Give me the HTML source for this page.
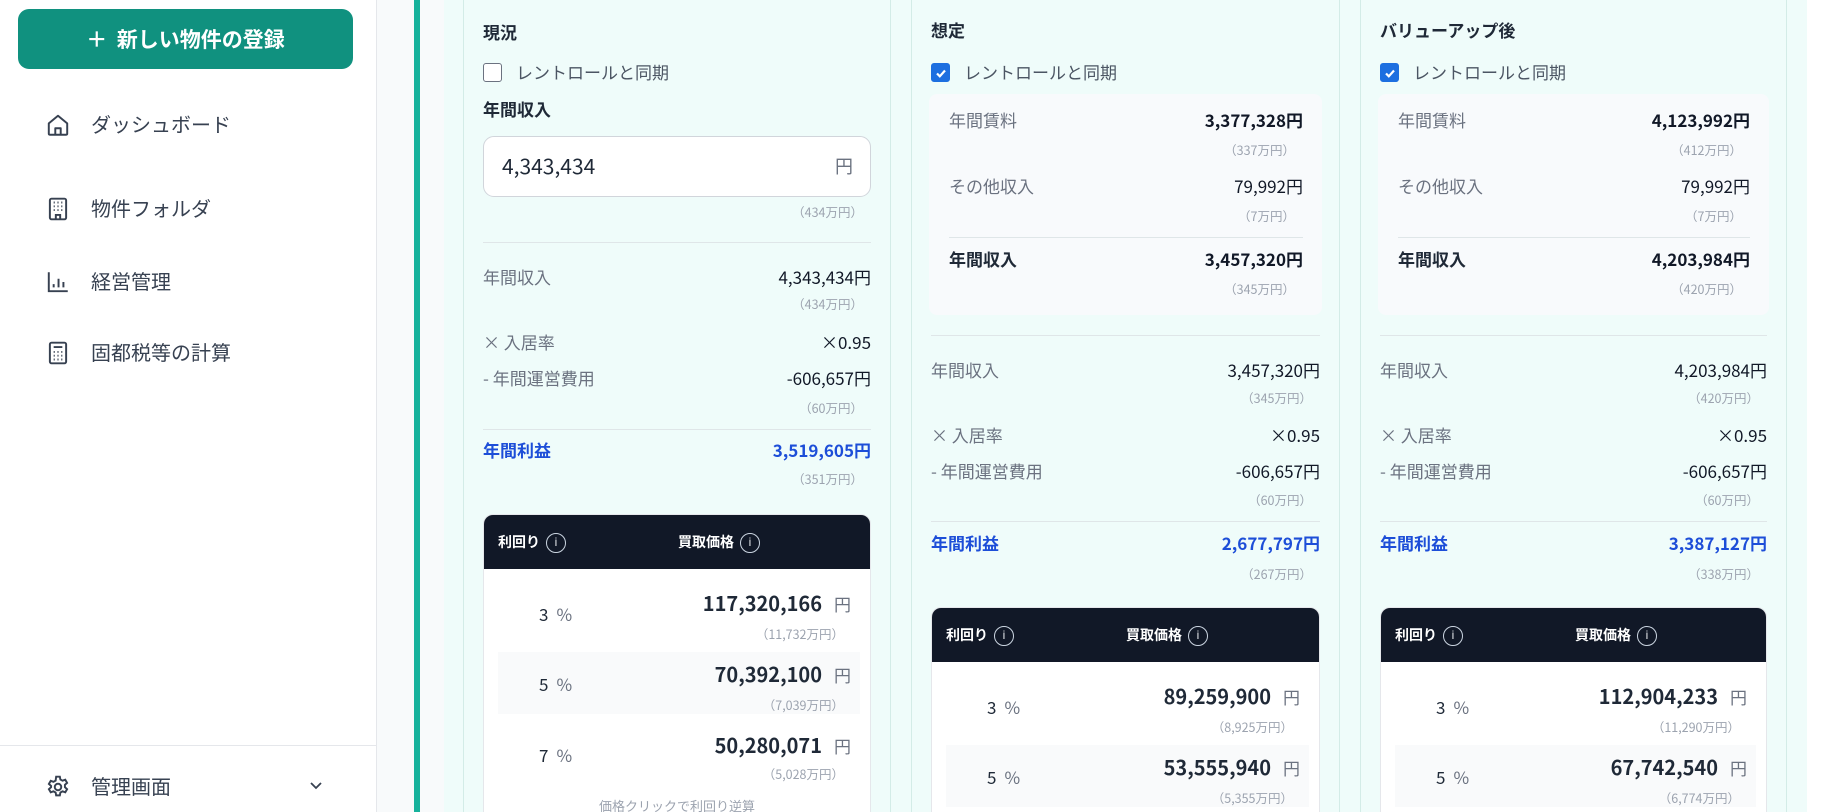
<!DOCTYPE html>
<html><head><meta charset="utf-8"><style>
*{box-sizing:border-box;margin:0;padding:0}
html,body{width:1825px;height:812px;overflow:hidden}
body{background:#fff;font-family:"Noto Sans CJK JP","Liberation Sans",sans-serif;position:relative}
#root{position:absolute;left:0;top:0;width:1825px;height:812px;overflow:hidden}
.a{position:absolute}
.side{left:0;top:0;width:377px;height:812px;background:#fff;border-right:1px solid #e5e7eb}
.btn{left:18px;top:9px;width:335px;height:60px;border-radius:11px;background:#10917f;color:#fff;font-size:21px;font-weight:bold;text-align:center;line-height:60px}
.nav{left:45px;font-size:20px;color:#374151;line-height:28px}
.nav svg{position:absolute;left:0;top:2px}
.nav span{position:absolute;left:46px;white-space:nowrap}
.card{top:-12px;height:824px;border:1px solid #d3ece7;border-bottom:none;border-radius:12px 12px 0 0;background:#effcfa;overflow:hidden}
.t{position:absolute;left:19px;font-size:17px;font-weight:bold;color:#1f2937;line-height:24px}
.cb{position:absolute;left:19px;font-size:17px;color:#4b5563;line-height:24px;white-space:nowrap}
.cb i{position:absolute;left:0;top:3px;width:19px;height:19px;border:1.5px solid #6b7280;border-radius:3px;background:#fff}
.cb i.on{background:#1d6fe0;border-color:#1d6fe0}
.cb span{position:absolute;left:33px}
.row{position:absolute;left:19px;right:19px;height:24px;line-height:24px;font-size:17px}
.row .l{float:left;color:#6b7280}.row .v{float:right;color:#111827}
.row.b .l{color:#1f2937;font-weight:bold}.row.b .v{font-weight:bold}
.row.p .l,.row.p .v{color:#1d4ed8;font-weight:bold}
.sub{position:absolute;right:27px;font-size:12.5px;color:#9ca3af;line-height:16px;white-space:nowrap}
.hr{position:absolute;left:19px;right:19px;height:1px;background:#dfe6e8}
.gbox{position:absolute;left:17px;right:17px;background:#f8fafc;border-radius:8px}
.tbl{position:absolute;left:19px;right:19px;background:#fff;border:1px solid #e5e7eb;border-bottom:none;border-radius:10px 10px 0 0;overflow:hidden}
.th{position:absolute;left:0;right:0;top:0;height:54px;background:#111827;color:#fff;font-size:14px;font-weight:bold;line-height:54px}
.th span{position:absolute;white-space:nowrap}
.ic{display:inline-block;width:20px;height:20px;border:1.5px solid #cbd5e1;border-radius:50%;font-size:12px;line-height:17px;text-align:center;vertical-align:middle;margin-left:6px;font-weight:normal;font-style:normal;color:#e5e7eb;font-family:"Liberation Sans",sans-serif}
.band{position:absolute;left:14px;right:10px;height:62px;background:#f9fafb}
.pc{position:absolute;left:55px;font-size:17px;color:#1f2937;line-height:24px}
.pc em{font-style:normal;color:#6b7280;margin-left:8px}
.pv{position:absolute;right:19px;font-size:20px;font-weight:bold;color:#1f2937;line-height:28px;white-space:nowrap}
.pv em{font-style:normal;font-weight:normal;color:#6b7280;font-size:17px;margin-left:12px}
.ps{position:absolute;right:26px;font-size:12.5px;color:#9ca3af;line-height:16px}
</style></head><body><div id="root">
<div class="a" style="left:377px;top:0;width:1448px;height:812px;background:#f8fafb"></div>
<div class="a" style="left:414px;top:0;width:6px;height:812px;background:#16b29c"></div>
<div class="a" style="left:444px;top:0;width:1363px;height:812px;background:#effcfa"></div>
<div class="a" style="left:1807px;top:0;width:18px;height:812px;background:#fff"></div>

<div class="a side">
<div class="a btn">＋&nbsp; 新しい物件の登録</div>
<div class="a nav" style="top:110px"><svg width="26" height="26" viewBox="0 0 24 24" fill="none" stroke="#374151" stroke-width="1.8" stroke-linejoin="round"><path d="M3.5 10.5L12 3.5l8.5 7V20a1 1 0 0 1-1 1h-15a1 1 0 0 1-1-1z"/><path d="M9.5 21v-6h5v6"/></svg><span>ダッシュボード</span></div>
<div class="a nav" style="top:194px"><svg width="26" height="26" viewBox="0 0 24 24" fill="none" stroke="#374151" stroke-width="1.8"><rect x="4.5" y="2.5" width="15" height="19" rx="1.5"/><path d="M8 6h1M11.5 6h1M15 6h1M8 9.5h1M11.5 9.5h1M15 9.5h1M8 13h1M11.5 13h1M15 13h1M10 21.5v-4h4v4"/></svg><span>物件フォルダ</span></div>
<div class="a nav" style="top:267px"><svg width="26" height="26" viewBox="0 0 24 24" fill="none" stroke="#374151" stroke-width="1.8"><path d="M3.5 3v17.5H21M8 17v-3M12.5 17V9M17 17v-5"/></svg><span>経営管理</span></div>
<div class="a nav" style="top:338px"><svg width="26" height="26" viewBox="0 0 24 24" fill="none" stroke="#374151" stroke-width="1.8"><rect x="4.5" y="2.5" width="15" height="19" rx="1.5"/><path d="M8 6.5h8M8 11h1M11.5 11h1M15 11h1M8 14.5h1M11.5 14.5h1M15 14.5h1M8 18h1M11.5 18h1M15 18h1"/></svg><span>固都税等の計算</span></div>
<div class="a" style="left:0;top:745px;width:377px;height:1px;background:#e5e7eb"></div>
<div class="a nav" style="top:772px"><svg width="26" height="26" viewBox="0 0 24 24" fill="none" stroke="#374151" stroke-width="1.8"><circle cx="12" cy="12" r="3"/><path d="M10.3 2.5h3.4l.5 2.6 2 1.1 2.5-.9 1.7 2.9-2 1.8v2.2l2 1.8-1.7 2.9-2.5-.9-2 1.1-.5 2.6h-3.4l-.5-2.6-2-1.1-2.5.9-1.7-2.9 2-1.8V11l-2-1.8 1.7-2.9 2.5.9 2-1.1z"/></svg><span>管理画面</span></div>
<svg class="a" style="left:307px;top:776px" width="18" height="18" viewBox="0 0 18 18" fill="none" stroke="#374151" stroke-width="1.8"><path d="M4 7l5 5 5-5"/></svg>
</div>

<!-- Card 1 -->
<div class="a card" style="left:463px;width:428px">
<div class="t" style="top:31px">現況</div>
<div class="cb" style="top:71px"><i></i><span>レントロールと同期</span></div>
<div class="t" style="top:108px">年間収入</div>
<div class="a" style="left:19px;right:19px;top:147px;height:61px;background:#fff;border:1px solid #d1d5db;border-radius:11px"><span class="a" style="left:18px;top:15px;font-size:21px;color:#1f2937;line-height:28px">4,343,434</span><span class="a" style="right:17px;top:16px;font-size:18px;color:#6b7280;line-height:26px">円</span></div>
<div class="sub" style="top:215px">（434万円）</div>
<div class="hr" style="top:253px"></div>
<div class="row" style="top:276px"><span class="l">年間収入</span><span class="v">4,343,434円</span></div>
<div class="sub" style="top:307px">（434万円）</div>
<div class="row" style="top:341px"><span class="l">× 入居率</span><span class="v">×0.95</span></div>
<div class="row" style="top:377px"><span class="l">- 年間運営費用</span><span class="v">-606,657円</span></div>
<div class="sub" style="top:411px">（60万円）</div>
<div class="hr" style="top:440px"></div>
<div class="row p" style="top:449px"><span class="l">年間利益</span><span class="v">3,519,605円</span></div>
<div class="sub" style="top:482px">（351万円）</div>
<div class="tbl" style="top:525px;height:299px">
<div class="th"><span style="left:14px">利回り<i class="ic">i</i></span><span style="left:194px">買取価格<i class="ic">i</i></span></div>
<div class="band" style="top:137px"></div>
<div class="pc" style="top:87px">3<em>%</em></div><div class="pv" style="top:74px">117,320,166<em>円</em></div><div class="ps" style="top:111px">（11,732万円）</div>
<div class="pc" style="top:157px">5<em>%</em></div><div class="pv" style="top:145px">70,392,100<em>円</em></div><div class="ps" style="top:182px">（7,039万円）</div>
<div class="pc" style="top:228px">7<em>%</em></div><div class="pv" style="top:216px">50,280,071<em>円</em></div><div class="ps" style="top:251px">（5,028万円）</div>
<div class="a" style="left:0;right:0;top:281px;text-align:center;font-size:13px;color:#9ca3af">価格クリックで利回り逆算</div>
</div>
</div>

<!-- Card 2 -->
<div class="a card" style="left:911px;width:429px">
<div class="t" style="top:29px">想定</div>
<div class="cb" style="top:71px"><i class="on"></i><span>レントロールと同期</span></div>
<svg class="a" style="left:23px;top:78px" width="12" height="12" viewBox="0 0 12 12" fill="none" stroke="#fff" stroke-width="2.2"><path d="M2 6.5l2.8 2.8L10 3.5"/></svg>
<div class="gbox" style="top:105px;height:221px"></div>
<div class="row" style="top:119px;left:37px;right:36px"><span class="l">年間賃料</span><span class="v" style="font-weight:bold">3,377,328円</span></div>
<div class="sub" style="top:153px;right:44px">（337万円）</div>
<div class="row" style="top:185px;left:37px;right:36px"><span class="l">その他収入</span><span class="v">79,992円</span></div>
<div class="sub" style="top:219px;right:44px">（7万円）</div>
<div class="hr" style="top:248px;left:37px;right:36px"></div>
<div class="row b" style="top:258px;left:37px;right:36px"><span class="l">年間収入</span><span class="v">3,457,320円</span></div>
<div class="sub" style="top:292px;right:44px">（345万円）</div>
<div class="hr" style="top:346px"></div>
<div class="row" style="top:369px"><span class="l">年間収入</span><span class="v">3,457,320円</span></div>
<div class="sub" style="top:401px">（345万円）</div>
<div class="row" style="top:434px"><span class="l">× 入居率</span><span class="v">×0.95</span></div>
<div class="row" style="top:470px"><span class="l">- 年間運営費用</span><span class="v">-606,657円</span></div>
<div class="sub" style="top:503px">（60万円）</div>
<div class="hr" style="top:532px"></div>
<div class="row p" style="top:542px"><span class="l">年間利益</span><span class="v">2,677,797円</span></div>
<div class="sub" style="top:577px">（267万円）</div>
<div class="tbl" style="top:618px;height:206px">
<div class="th"><span style="left:14px">利回り<i class="ic">i</i></span><span style="left:194px">買取価格<i class="ic">i</i></span></div>
<div class="band" style="top:137px"></div>
<div class="pc" style="top:87px">3<em>%</em></div><div class="pv" style="top:74px">89,259,900<em>円</em></div><div class="ps" style="top:111px">（8,925万円）</div>
<div class="pc" style="top:157px">5<em>%</em></div><div class="pv" style="top:145px">53,555,940<em>円</em></div><div class="ps" style="top:182px">（5,355万円）</div>
</div>
</div>

<!-- Card 3 -->
<div class="a card" style="left:1360px;width:427px">
<div class="t" style="top:29px">バリューアップ後</div>
<div class="cb" style="top:71px"><i class="on"></i><span>レントロールと同期</span></div>
<svg class="a" style="left:23px;top:78px" width="12" height="12" viewBox="0 0 12 12" fill="none" stroke="#fff" stroke-width="2.2"><path d="M2 6.5l2.8 2.8L10 3.5"/></svg>
<div class="gbox" style="top:105px;height:221px"></div>
<div class="row" style="top:119px;left:37px;right:36px"><span class="l">年間賃料</span><span class="v" style="font-weight:bold">4,123,992円</span></div>
<div class="sub" style="top:153px;right:44px">（412万円）</div>
<div class="row" style="top:185px;left:37px;right:36px"><span class="l">その他収入</span><span class="v">79,992円</span></div>
<div class="sub" style="top:219px;right:44px">（7万円）</div>
<div class="hr" style="top:248px;left:37px;right:36px"></div>
<div class="row b" style="top:258px;left:37px;right:36px"><span class="l">年間収入</span><span class="v">4,203,984円</span></div>
<div class="sub" style="top:292px;right:44px">（420万円）</div>
<div class="hr" style="top:346px"></div>
<div class="row" style="top:369px"><span class="l">年間収入</span><span class="v">4,203,984円</span></div>
<div class="sub" style="top:401px">（420万円）</div>
<div class="row" style="top:434px"><span class="l">× 入居率</span><span class="v">×0.95</span></div>
<div class="row" style="top:470px"><span class="l">- 年間運営費用</span><span class="v">-606,657円</span></div>
<div class="sub" style="top:503px">（60万円）</div>
<div class="hr" style="top:532px"></div>
<div class="row p" style="top:542px"><span class="l">年間利益</span><span class="v">3,387,127円</span></div>
<div class="sub" style="top:577px">（338万円）</div>
<div class="tbl" style="top:618px;height:206px">
<div class="th"><span style="left:14px">利回り<i class="ic">i</i></span><span style="left:194px">買取価格<i class="ic">i</i></span></div>
<div class="band" style="top:137px"></div>
<div class="pc" style="top:87px">3<em>%</em></div><div class="pv" style="top:74px">112,904,233<em>円</em></div><div class="ps" style="top:111px">（11,290万円）</div>
<div class="pc" style="top:157px">5<em>%</em></div><div class="pv" style="top:145px">67,742,540<em>円</em></div><div class="ps" style="top:182px">（6,774万円）</div>
</div>
</div>
</div></body></html>
